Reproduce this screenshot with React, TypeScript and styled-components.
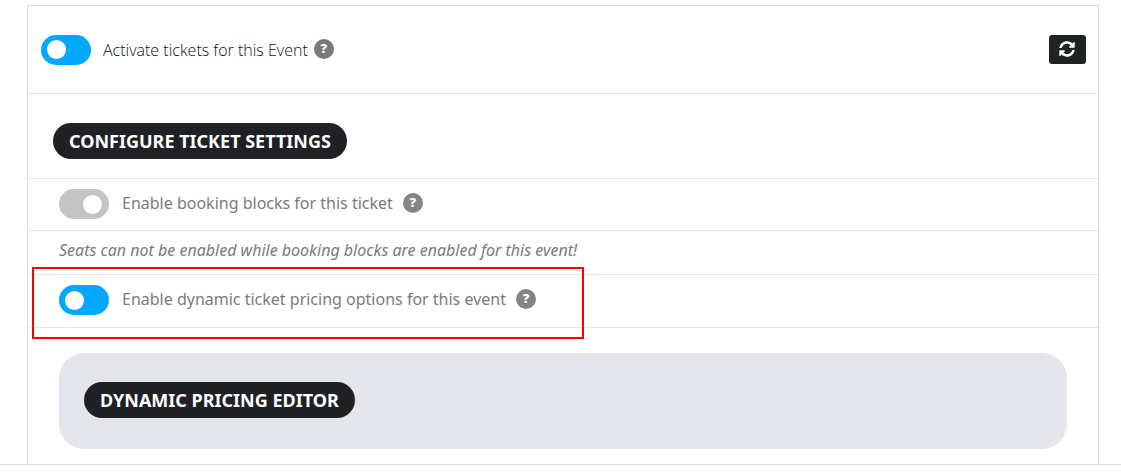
import React from "react";
import styled, { createGlobalStyle } from "styled-components";
import { FaSyncAlt } from "react-icons/fa";

const GlobalStyle = createGlobalStyle`
  *, *::before, *::after { box-sizing: border-box; }
  body {
    margin: 0;
    background: #fff;
    color: #7b7b7b;
    font: 16px/24px "Noto Sans", sans-serif;
  }
`;

const Page = styled.main`
  padding: 5px 22px 0 27px;
  border-bottom: 1px solid #dcdcdc;
`;

const Panel = styled.section`
  border: 1px solid #dcdcdc;
  border-bottom: 0;
`;

const Header = styled.header`
  display: flex;
  align-items: center;
  justify-content: space-between;
  min-height: 88px;
  padding: 0 12px 0 13px;
  border-bottom: 1px solid #e2e2e2;
`;

const TitleRow = styled.div`
  padding: 29px 25px 19px;
  border-bottom: 1px solid #e5e5e5;
`;

const Pill = styled.h2`
  width: fit-content;
  margin: 0;
  padding: 6px 16px;
  border-radius: 18px;
  background: #202124;
  color: #fff;
  font-size: 18px;
  line-height: 24px;
  font-weight: 700;
`;

const OptionRow = styled.div<{ $tall?: boolean }>`
  padding: 10px 31px ${(p) => (p.$tall ? 12 : 11)}px;
  border-bottom: 1px solid #e5e5e5;
`;

const Note = styled.p`
  margin: 0;
  padding: 7px 31px 12px;
  border-bottom: 1px solid #e5e5e5;
  font-style: italic;
`;

const Setting = styled.div`
  display: flex;
  align-items: center;
`;

const SettingLabel = styled.label<{ $primary?: boolean }>`
  display: flex;
  align-items: center;
  gap: ${(p) => (p.$primary ? 12 : 13)}px;
  color: ${(p) => (p.$primary ? "#0f1114" : "inherit")};
  font-family: ${(p) => (p.$primary ? '"Open Sans"' : '"Noto Sans"')}, sans-serif;
  font-weight: ${(p) => (p.$primary ? 300 : 400)};
`;

const SettingText = styled.span<{ $primary?: boolean }>`
  padding-bottom: ${(p) => (p.$primary ? 0 : 2)}px;
`;

const Toggle = styled.input`
  appearance: none;
  display: flex;
  align-items: center;
  flex: none;
  width: 50px;
  height: 30px;
  margin: 0;
  padding: 0 7px 0 6px;
  border-radius: 15px;
  background: #c4c4c4;
  cursor: pointer;

  &::before {
    content: "";
    width: 19px;
    height: 19px;
    margin-left: auto;
    border-radius: 50%;
    background: #fff;
  }
  &:checked { background: #00a9ff; }
  &:checked::before { margin-left: 0; }
`;

const Help = styled.button<{ $dark?: boolean }>`
  flex: none;
  width: 20px;
  height: 20px;
  margin: 0 0 2px ${(p) => (p.$dark ? 6 : 10)}px;
  padding: 0 0 2px;
  border: 0;
  border-radius: 50%;
  background: ${(p) => (p.$dark ? "#7a7a7a" : "#858585")};
  color: #fff;
  font: 800 13px/18px "Open Sans", sans-serif;
  cursor: help;
`;

const RefreshButton = styled.button`
  display: flex;
  align-items: center;
  justify-content: center;
  width: 37px;
  height: 29px;
  padding: 0 1px 1px 0;
  border: 0;
  border-radius: 3px;
  background: #1f2421;
  color: #fff;
  font-size: 16px;
  cursor: pointer;
`;

const Highlight = styled.div`
  position: relative;

  &::after {
    content: "";
    position: absolute;
    top: -8px;
    left: 4px;
    width: 552px;
    height: 72px;
    border: 2px solid #fe0000;
    pointer-events: none;
  }
`;

const EditorArea = styled.div`
  padding: 25px 31px 15px;
`;

const Editor = styled.section`
  padding: 29px 25px 31px;
  border-radius: 25px;
  background: #e5e6eb;
`;

type OptionProps = { id: string; text: string; on?: boolean; primary?: boolean };

function Option({ id, text, on, primary }: OptionProps) {
  return (
    <Setting>
      <SettingLabel htmlFor={id} $primary={primary}>
        <Toggle type="checkbox" id={id} defaultChecked={on} />
        <SettingText $primary={primary}>{text}</SettingText>
      </SettingLabel>
      <Help type="button" $dark={primary}>?</Help>
    </Setting>
  );
}

export default function App() {
  return (
    <>
      <GlobalStyle />
      <Page>
        <Panel>
          <Header>
            <Option id="tickets" text="Activate tickets for this Event" on primary />
            <RefreshButton type="button"><FaSyncAlt /></RefreshButton>
          </Header>
          <TitleRow>
            <Pill>CONFIGURE TICKET SETTINGS</Pill>
          </TitleRow>
          <OptionRow>
            <Option id="blocks" text="Enable booking blocks for this ticket" />
          </OptionRow>
          <Note>Seats can not be enabled while booking blocks are enabled for this event!</Note>
          <Highlight>
            <OptionRow $tall>
              <Option id="pricing" text="Enable dynamic ticket pricing options for this event" on />
            </OptionRow>
          </Highlight>
          <EditorArea>
            <Editor>
              <Pill>DYNAMIC PRICING EDITOR</Pill>
            </Editor>
          </EditorArea>
        </Panel>
      </Page>
    </>
  );
}
